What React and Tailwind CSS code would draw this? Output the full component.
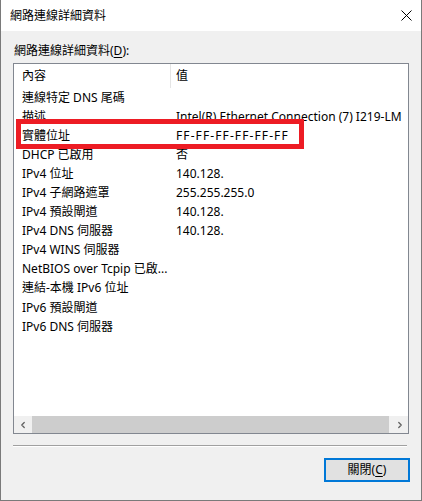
import { ChevronLeft, ChevronRight } from "lucide-react";

const rows = [
  { name: "連線特定 DNS 尾碼", value: "" },
  { name: "描述", value: "Intel(R) Ethernet Connection (7) I219-LM" },
  { name: "實體位址", value: "FF-FF-FF-FF-FF-FF", wide: true },
  { name: "DHCP 已啟用", value: "否" },
  { name: "IPv4 位址", value: "140.128." },
  { name: "IPv4 子網路遮罩", value: "255.255.255.0" },
  { name: "IPv4 預設閘道", value: "140.128." },
  { name: "IPv4 DNS 伺服器", value: "140.128." },
  { name: "IPv4 WINS 伺服器", value: "" },
  { name: "NetBIOS over Tcpip 已啟...", value: "" },
  { name: "連結-本機 IPv6 位址", value: "" },
  { name: "IPv6 預設閘道", value: "" },
  { name: "IPv6 DNS 伺服器", value: "" },
];

export default function App() {
  return (
    <div className="relative w-[422px] h-[501px] flex flex-col border-x border-b border-[#7a7a7a] bg-[#f0f0f0] text-[12px] text-black font-['Noto_Sans','Noto_Sans_CJK_TC',sans-serif] overflow-hidden">
      {/* Title bar */}
      <div className="h-[31px] flex items-center justify-between bg-white pl-[9px] pr-[9px] flex-shrink-0">
        <span className="leading-4">網路連線詳細資料</span>
        <svg width="11" height="11" viewBox="0 0 11 11">
          <path d="M0.5 0.5 L10.5 10.5 M10.5 0.5 L0.5 10.5" stroke="#000" strokeWidth="1" fill="none" />
        </svg>
      </div>

      {/* Body */}
      <div className="flex-1 flex flex-col pl-[12px] pt-[12px]">
        <div className="h-4 leading-4 ml-[1px]">
          網路連線詳細資料(<span className="underline underline-offset-2">D</span>):
        </div>

        {/* List box */}
        <div className="mt-[4px] w-[396px] h-[371px] border border-[#828790] bg-white flex flex-col overflow-hidden">
          <div className="flex-1 overflow-hidden">
            <div className="flex h-[24px] items-center">
              <div className="w-[157px] h-full flex items-center pl-[8px] border-r border-[#e5e5e5]">內容</div>
              <div className="pl-[5px]">值</div>
            </div>
            {rows.map((r) => (
              <div key={r.name} className="flex h-[19.1px] items-center whitespace-nowrap">
                <div className="w-[157px] pl-[8px] overflow-hidden">{r.name}</div>
                <div className={r.wide ? "pl-[5px] tracking-[1.1px]" : "pl-[5px]"}>{r.value}</div>
              </div>
            ))}
          </div>
          {/* Horizontal scrollbar */}
          <div className="h-[17px] flex bg-[#f0f0f0] flex-shrink-0">
            <div className="w-[17px] flex items-center justify-center text-[#606060]">
              <ChevronLeft size={10} strokeWidth={3} />
            </div>
            <div className="flex-1 bg-[#cdcdcd] ml-[1px] mr-[2px]" />
            <div className="w-[17px] flex items-center justify-center text-[#606060]">
              <ChevronRight size={10} strokeWidth={3} />
            </div>
          </div>
        </div>

        {/* Separator */}
        <div className="mt-[11px] w-[394px] h-[2px] border-t border-[#a0a0a0] border-b border-b-white" />

        {/* Button */}
        <div className="w-[397px] flex justify-end mt-[11px]">
          <button className="w-[86px] h-[24px] border-2 border-[#0078d7] bg-[#e1e1e1] flex items-center justify-center leading-4">
            關閉(<span className="underline underline-offset-2">C</span>)
          </button>
        </div>
      </div>

      {/* Red highlight annotation */}
      <div className="absolute left-[15px] top-[119px] w-[288px] h-[30px] border-[5px] border-[#ed1c24]" />
    </div>
  );
}
